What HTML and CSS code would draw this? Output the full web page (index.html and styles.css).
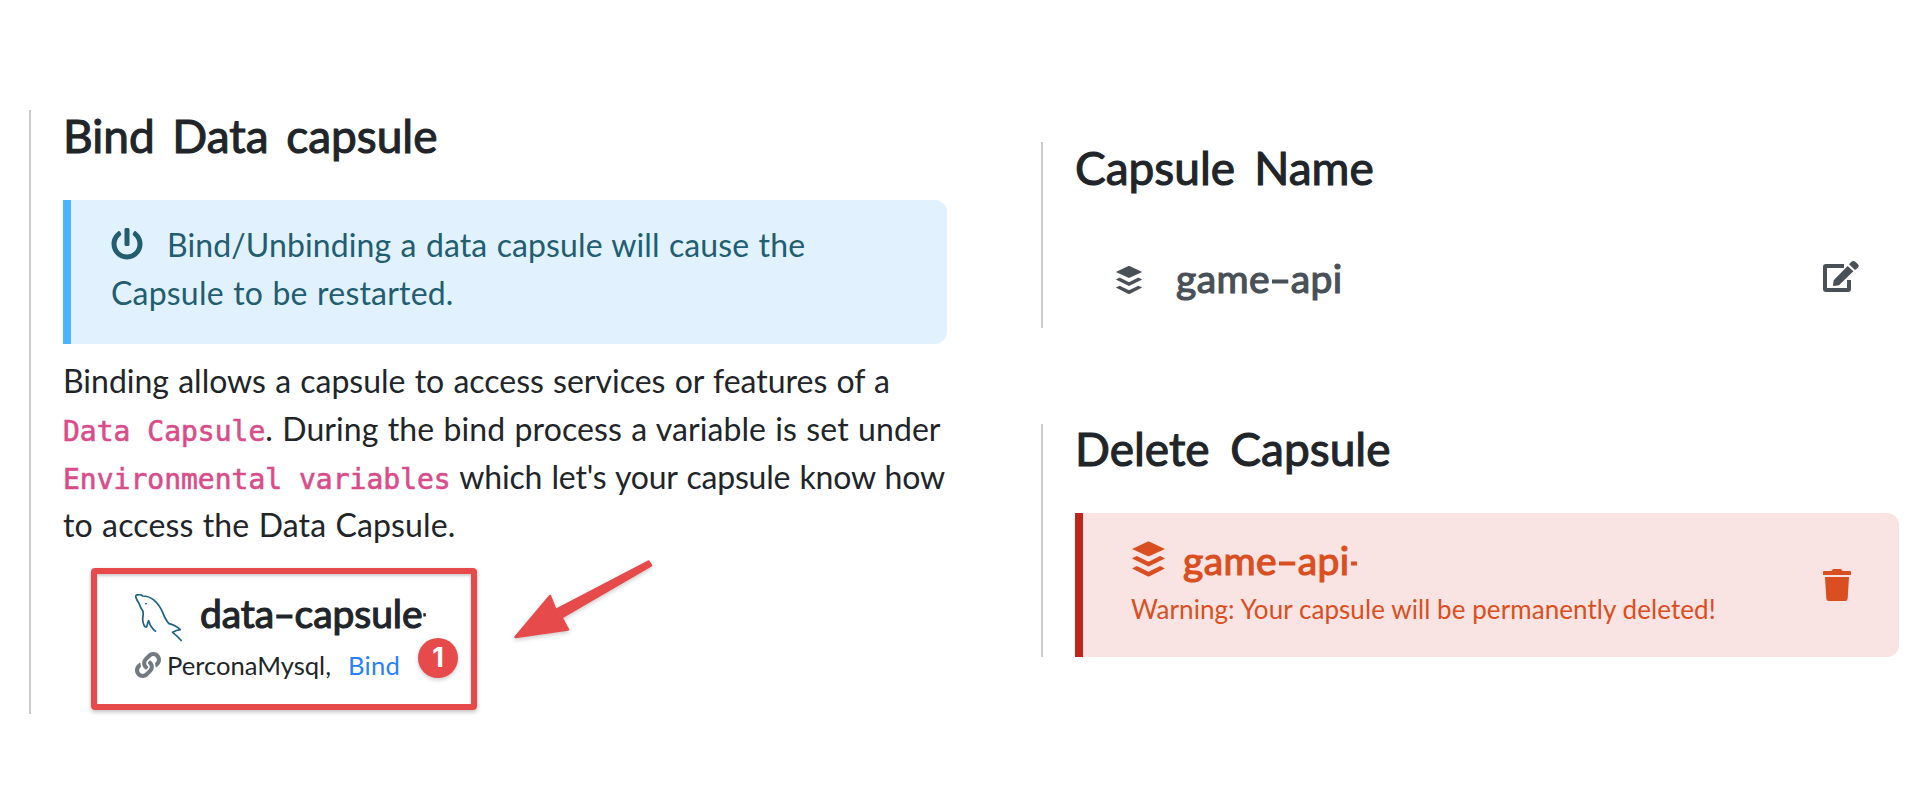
FILE: index.html
```
<!DOCTYPE html>
<html lang="en">
<head>
<meta charset="utf-8">
<title>Capsule settings</title>
<link rel="stylesheet" href="styles.css">
</head>
<body>
<svg class="defs" width="0" height="0">
  <symbol id="buffer" viewBox="0 0 448 512"><path d="M427.84 380.67l-196.5 97.82a18.6 18.6 0 0 1-14.67 0L20.16 380.67c-4-2-4-5.28 0-7.29L67.22 350a18.65 18.65 0 0 1 14.69 0l134.76 67a18.51 18.51 0 0 0 14.67 0l134.76-67a18.62 18.62 0 0 1 14.68 0l47.06 23.43c4.05 1.96 4.05 5.24 0 7.24zm0-136.53l-47.06-23.43a18.62 18.62 0 0 0-14.68 0l-134.76 67.08a18.68 18.68 0 0 1-14.67 0L81.91 220.71a18.65 18.65 0 0 0-14.69 0l-47.06 23.43c-4 2-4 5.29 0 7.31l196.51 97.8a18.6 18.6 0 0 0 14.67 0l196.5-97.8c4.05-2.02 4.05-5.3 0-7.31zM20.16 130.42l196.5 90.29a20.08 20.08 0 0 0 14.67 0l196.51-90.29c4-1.86 4-4.89 0-6.74L231.33 33.4a19.88 19.88 0 0 0-14.67 0l-196.5 90.28c-4.05 1.85-4.05 4.88 0 6.74z"/></symbol>
</svg>
<main class="page">
  <section class="panel bind">
    <h2 class="heading heading-bind">Bind Data capsule</h2>
    <div class="alert alert-info">
      <div class="line l-a1"><svg class="power" viewBox="0 0 512 512"><path d="M400 54.1c63 45 104 118.6 104 201.9 0 136.8-110.8 247.7-247.5 248C120 504.3 8.2 393 8 256.4 7.9 173.1 48.9 99.3 111.8 54.2c11.7-8.3 28-4.8 35 7.7L162.6 90c5.9 10.5 3.1 23.8-6.6 31-41.5 30.8-68 79.6-68 134.9-.1 92.3 74.5 168.1 168 168.1 91.6 0 168.6-74.2 168-169.1-.3-51.8-24.7-101.8-68.1-134-9.7-7.2-12.4-20.5-6.5-30.9l15.8-28.1c7-12.4 23.2-16.1 34.8-7.8zM296 264V24c0-13.3-10.7-24-24-24h-32c-13.3 0-24 10.7-24 24v240c0 13.3 10.7 24 24 24h32c13.3 0 24-10.7 24-24z"/></svg>Bind/Unbinding a data capsule will cause the</div>
      <div class="line l-a2">Capsule to be restarted.</div>
    </div>
    <div class="copy">
      <div class="line">Binding allows a capsule to access services or features of a</div>
      <div class="line l-p2"><code>Data Capsule</code>. During the bind process a variable is set under</div>
      <div class="line l-p3"><code>Environmental variables</code> which let's your capsule know how</div>
      <div class="line l-p4">to access the Data Capsule.</div>
    </div>
    <div class="callout">
      <div class="service">
        <svg class="dolphin" viewBox="15 12 144 144"><path d="M17 21Q16 14 27 14Q34 14 38 18Q56 18 70 29Q88 44 98 67Q106 89 117 101Q138 106 151 119Q139 120 128 127Q142 138 155 153M17 20Q19 29 27 40Q31 53 38 62Q41 70 38 84Q38 102 45 110Q50 114 51 107Q53 97 56 92Q61 112 78 125"/><circle cx="48" cy="41" r="2.8"/></svg>
        <h3 class="name name-data">data<span class="dash">-</span>capsule<span class="stub stub-sm">-</span></h3>
      </div>
      <div class="meta">
        <svg class="link" viewBox="0 0 512 512"><path d="M326.612 185.391c59.747 59.809 58.927 155.698.36 214.59-.11.12-.24.25-.36.37l-67.2 67.2c-59.27 59.27-155.699 59.262-214.96 0-59.27-59.26-59.27-155.7 0-214.96l37.106-37.106c9.84-9.84 26.786-3.3 27.294 10.606.648 17.722 3.826 35.527 9.69 52.721 1.986 5.822.567 12.262-3.783 16.612l-13.087 13.087c-28.026 28.026-28.905 73.66-1.155 101.96 28.024 28.579 74.086 28.749 102.325.51l67.2-67.19c28.191-28.191 28.073-73.757 0-101.83-3.701-3.694-7.429-6.564-10.341-8.569a16.037 16.037 0 0 1-6.947-12.606c-.396-10.567 3.348-21.456 11.698-29.806l21.054-21.055c5.521-5.521 14.182-6.199 20.584-1.731a152.482 152.482 0 0 1 20.522 17.197zM467.547 44.449c-59.261-59.262-155.69-59.27-214.96 0l-67.2 67.2c-.12.12-.25.25-.36.37-58.566 58.892-59.387 154.781.36 214.59a152.454 152.454 0 0 0 20.521 17.196c6.402 4.468 15.064 3.789 20.584-1.731l21.054-21.055c8.35-8.35 12.094-19.239 11.698-29.806a16.037 16.037 0 0 0-6.947-12.606c-2.912-2.005-6.64-4.875-10.341-8.569-28.073-28.073-28.191-73.639 0-101.83l67.2-67.19c28.239-28.239 74.3-28.069 102.325.51 27.75 28.3 26.872 73.934-1.155 101.96l-13.087 13.087c-4.35 4.35-5.769 10.79-3.783 16.612 5.864 17.194 9.042 34.999 9.69 52.721.509 13.906 17.454 20.446 27.294 10.606l37.106-37.106c59.271-59.259 59.271-155.699.001-214.959z"/></svg>
        <span>PerconaMysql,</span><a class="bind-link">Bind</a>
      </div>
      <span class="badge">1</span>
      <svg class="arrow" viewBox="0 0 150 90"><path d="M5.500 77L40 36L45.500 50L138.500 1.500L141 5.500L51.500 57.500L58 69.500Z"/></svg>
    </div>
  </section>
  <div class="side">
    <section class="panel rename">
      <h2 class="heading heading-name">Capsule Name</h2>
      <div class="row">
        <svg class="buffer-sm"><use href="#buffer"/></svg>
        <h3 class="name name-grey">game<span class="dash">-</span>api</h3>
        <svg class="edit" viewBox="24 24 108 96"><path class="frame" d="M87 42H33a3 3 0 0 0-3 3V111a3 3 0 0 0 3 3H99a3 3 0 0 0 3-3V84"/><path class="gap" d="M54 99L56 85L98 42L115 58L72 100L57 102Q54 102 54 99Z"/><path d="M54 99L56 85L98 42L115 58L72 100L57 102Q54 102 54 99ZM102 37L108 31Q114 24 121 29L129 37Q134 43 128 48L120 54Z"/></svg>
      </div>
    </section>
    <section class="panel delete">
      <h2 class="heading heading-delete">Delete Capsule</h2>
      <div class="alert alert-danger">
        <div>
          <div class="service">
            <svg class="buffer-lg"><use href="#buffer"/></svg>
            <h3 class="name">game<span class="dash">-</span>api<span class="stub">-</span></h3>
          </div>
          <p class="warning">Warning: Your capsule will be permanently deleted!</p>
        </div>
        <svg class="trash" viewBox="0 0 28 32"><path d="M1 2H8.500L10 0H18L19.500 2H27Q28 2 28 3V6H0V3Q0 2 1 2ZM2 8H26L24.700 29.500Q24.500 32 22 32H6Q3.500 32 3.300 29.500Z"/></svg>
      </div>
    </section>
  </div>
</main>
</body>
</html>
```
FILE: styles.css
```
* { box-sizing: border-box; }
body { margin: 0; background: #fff; color: #212529; font-family: Lato, "Open Sans", sans-serif; }
h2, h3, p { margin: 0; }
svg { display: block; flex: none; fill: currentColor; }
.defs { position: absolute; }
.page { display: flex; height: 794px; align-items: flex-start; padding: 110px 29px 0; }
.panel { border-left: 2px solid #ccc; padding-left: 32px; }
.bind { width: 918px; height: 604px; margin-right: 94px; }
.side { flex: 1; padding-top: 32px; display: flex; flex-direction: column; gap: 96px; }

.heading { height: 50px; font-size: 46px; font-weight: 400; line-height: 52px; white-space: nowrap; letter-spacing: 0; -webkit-text-stroke: 1.1px currentColor; }
.heading-bind { word-spacing: 5.8px; }
.heading-name { word-spacing: 7.4px; }
.heading-delete { height: 48px; word-spacing: 9px; line-height: 50px; }

.alert { height: 144px; border-left: 8px solid; border-radius: 0 12px 12px 0; }
.alert-info { margin-top: 40px; padding: 21px 40px 0; background: #e1f1fe; border-color: #4db5ff; color: #225d70; }
.alert-danger { margin-top: 41px; padding: 20px 48px; background: #f9e4e3; border-color: #bd271b; color: #d94f21; display: flex; justify-content: space-between; align-items: center; }

.line { height: 48px; line-height: 48px; font-size: 32px; white-space: nowrap; word-spacing: 1px; }
.l-a1 { display: flex; letter-spacing: .11px; }
.l-a2 { letter-spacing: .2px; }
.l-p2 { letter-spacing: .09px; }
.l-p3 { letter-spacing: -.2px; word-spacing: 1.3px; }
.l-p4 { letter-spacing: .13px; }
.power { width: 32px; height: 32px; margin: 7px 24px 0 0; }
.copy { margin-top: 13px; }
code { font: 28px/28px "DejaVu Sans Mono", monospace; color: #d94c8a; letter-spacing: 0; word-spacing: 0; -webkit-text-stroke: .6px #d94c8a; }

.callout { position: relative; width: 386px; height: 142px; margin: 19px 0 0 28px; padding: 14px 0 0 38px; border: 6px solid #e64a4b; border-radius: 4px; box-shadow: 0 2px 4px rgba(0,0,0,.25), inset 0 2px 3px rgba(0,0,0,.2); }
.service { display: flex; height: 48px; }
.name { font-size: 39px; font-weight: 400; line-height: 48px; white-space: nowrap; letter-spacing: .4px; -webkit-text-stroke: 1.2px currentColor; }
.name-data { margin: 1px 0 0 17px; letter-spacing: -.05px; }
.name-grey { margin: 2px 0 0 33px; }
.dash { display: inline-block; margin: 0 3px; transform: scaleX(1.5); }
.stub { display: inline-block; width: 8px; transform: scaleX(.55); transform-origin: left; }
.stub-sm { width: 3px; transform: scale(.22, .75); }
.dolphin { width: 48px; height: 48px; margin-top: 6px; fill: #1f6389; }
.dolphin path { fill: none; stroke: #1f6389; stroke-width: 5.2; stroke-linejoin: round; }
.meta { display: flex; align-items: center; height: 40px; margin-top: 9px; font-size: 25.6px; }
.link { width: 26px; height: 26px; margin-right: 6px; color: #727980; }
.bind-link { margin-left: 17px; color: #2780ff; letter-spacing: .3px; }
.badge { position: absolute; left: 321px; top: 64px; width: 40px; height: 40px; border-radius: 50%; background: #e64a4b; color: #fff; font: 700 27px/39px Inter, sans-serif; text-align: center; box-shadow: 0 2px 4px rgba(0,0,0,.2); }
.arrow { position: absolute; left: 413px; top: -14px; width: 150px; height: 90px; fill: #e64a4b; stroke: #e64a4b; stroke-width: 2.5; stroke-linejoin: round; overflow: visible; filter: drop-shadow(0 2px 2px rgba(0,0,0,.2)); }

.rename { height: 186px; }
.row { display: flex; align-items: flex-start; height: 48px; margin-top: 60px; padding: 0 40px; color: #495057; }
.buffer-sm { width: 28px; height: 32px; margin-top: 12px; }
.edit { width: 36px; height: 32px; margin: 8px 0 0 auto; }
.edit .frame { fill: none; stroke: currentColor; stroke-width: 12; }
.edit .gap { fill: #fff; stroke: #fff; stroke-width: 3; }
.delete { height: 233px; }
.buffer-lg { width: 35px; height: 40px; margin-top: 3px; }
.alert-danger .name { margin-left: 17px; }
.alert-danger .service { margin-top: -2px; }
.warning { font-size: 26px; line-height: 48px; margin-top: 1px; white-space: nowrap; letter-spacing: .07px; }
.trash { width: 28px; height: 32px; }
```
